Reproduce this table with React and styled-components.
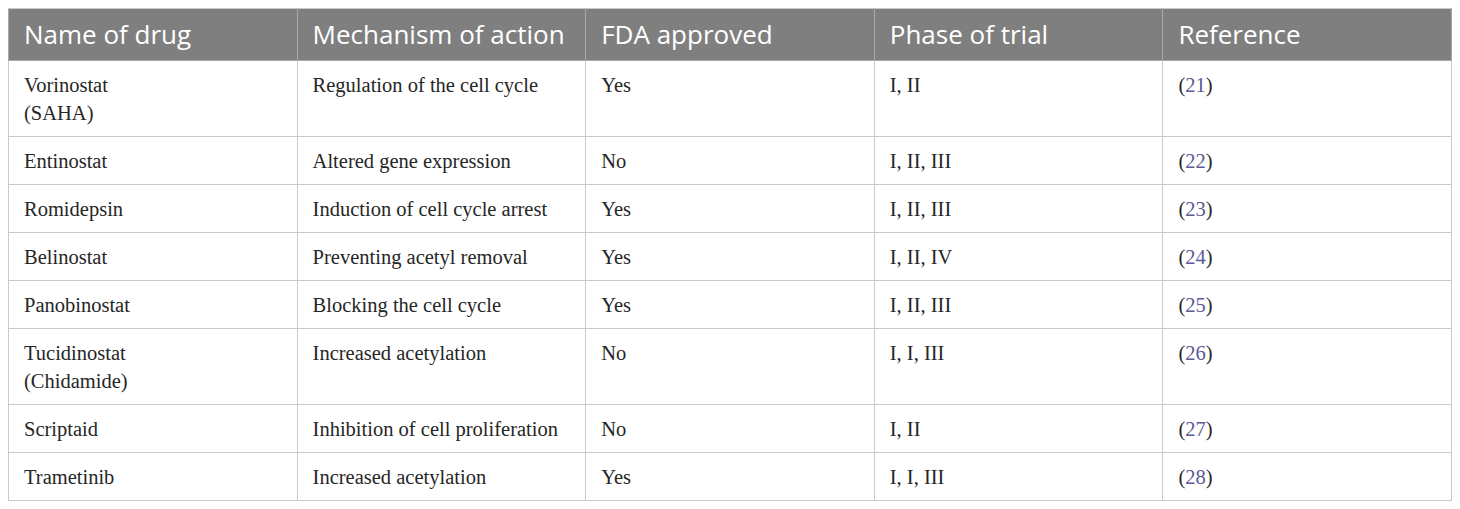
import styled, { createGlobalStyle } from 'styled-components';

const GlobalStyle = createGlobalStyle`
    body {
        margin: 8px;
        background: white;
    }
`;

const Table = styled.table`
    width: 100%;
    border-collapse: collapse;
    table-layout: fixed;
    border: 1px solid #cacaca;
`;

const HeadCell = styled.th`
    background-color: #7f7f7f;
    color: white;
    font-family: "Open Sans", sans-serif;
    font-size: 26px;
    font-weight: 400;
    text-align: left;
    line-height: 32px;
    padding: 9px 15px 10px;
    border: 1px solid #a9a9a9;
    border-top-color: #cacaca;
`;

const Cell = styled.td`
    font-family: "Liberation Serif", serif;
    font-size: 20.5px;
    color: #262626;
    line-height: 28px;
    vertical-align: top;
    padding: 10px 15px 9px;
    border: 1px solid #cacaca;
`;

const Ref = styled.span`
    color: #5a5a96;
`;

const columns = ['Name of drug', 'Mechanism of action', 'FDA approved', 'Phase of trial', 'Reference'];

const rows = [
    [['Vorinostat', '(SAHA)'], 'Regulation of the cell cycle', 'Yes', 'I, II', 21],
    [['Entinostat'], 'Altered gene expression', 'No', 'I, II, III', 22],
    [['Romidepsin'], 'Induction of cell cycle arrest', 'Yes', 'I, II, III', 23],
    [['Belinostat'], 'Preventing acetyl removal', 'Yes', 'I, II, IV', 24],
    [['Panobinostat'], 'Blocking the cell cycle', 'Yes', 'I, II, III', 25],
    [['Tucidinostat', '(Chidamide)'], 'Increased acetylation', 'No', 'I, I, III', 26],
    [['Scriptaid'], 'Inhibition of cell proliferation', 'No', 'I, II', 27],
    [['Trametinib'], 'Increased acetylation', 'Yes', 'I, I, III', 28],
];

const App = () => {
    return (
        <>
            <GlobalStyle />
            <Table>
                <thead>
                    <tr>
                        {columns.map((c) => (
                            <HeadCell key={c}>{c}</HeadCell>
                        ))}
                    </tr>
                </thead>
                <tbody>
                    {rows.map(([name, mech, fda, phase, ref]) => (
                        <tr key={name[0]}>
                            <Cell>
                                {name.map((line, i) => (
                                    <div key={i}>{line}</div>
                                ))}
                            </Cell>
                            <Cell>{mech}</Cell>
                            <Cell>{fda}</Cell>
                            <Cell>{phase}</Cell>
                            <Cell>
                                (<Ref>{ref}</Ref>)
                            </Cell>
                        </tr>
                    ))}
                </tbody>
            </Table>
        </>
    );
};

export default App;
